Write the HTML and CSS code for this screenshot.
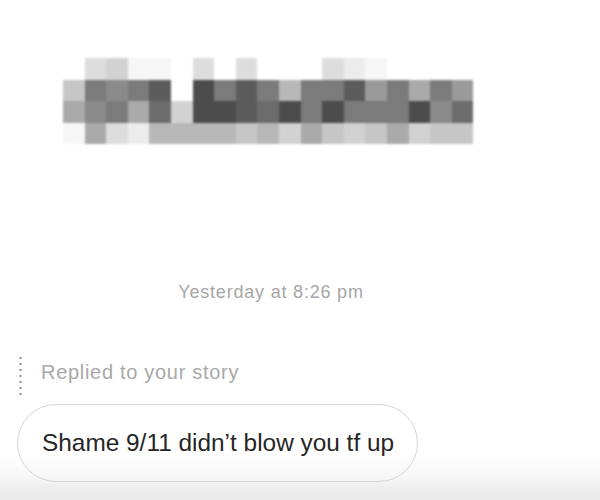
FILE: index.html
```html
<!DOCTYPE html>
<html lang="en">
<head>
<meta charset="utf-8">
<title>Story reply</title>
<link rel="stylesheet" href="styles.css">
</head>
<body>
<div class="page">
  <div class="mosaic">
    <i class="x"></i><i class="l2"></i><i class="l3"></i><i class="l0"></i><i class="l0"></i><i class="x"></i><i class="l2"></i><i class="x"></i><i class="l2"></i><i class="x"></i><i class="x"></i><i class="x"></i><i class="l2"></i><i class="l1"></i><i class="l0"></i><i class="x"></i><i class="x"></i><i class="x"></i><i class="x"></i>
    <i class="l4"></i><i class="l9"></i><i class="l8"></i><i class="l9"></i><i class="l11"></i><i class="x"></i><i class="l12"></i><i class="l9"></i><i class="l11"></i><i class="l9"></i><i class="l5"></i><i class="l9"></i><i class="l9"></i><i class="l11"></i><i class="l7"></i><i class="l9"></i><i class="l6"></i><i class="l9"></i><i class="l7"></i>
    <i class="l6"></i><i class="l8"></i><i class="l9"></i><i class="l6"></i><i class="l10"></i><i class="l3"></i><i class="l12"></i><i class="l12"></i><i class="l11"></i><i class="l10"></i><i class="l12"></i><i class="l9"></i><i class="l12"></i><i class="l9"></i><i class="l9"></i><i class="l9"></i><i class="l12"></i><i class="l8"></i><i class="l10"></i>
    <i class="l0"></i><i class="l6"></i><i class="l2"></i><i class="l1"></i><i class="l5"></i><i class="l5"></i><i class="l5"></i><i class="l5"></i><i class="l4"></i><i class="l5"></i><i class="l3"></i><i class="l6"></i><i class="l4"></i><i class="l3"></i><i class="l4"></i><i class="l6"></i><i class="l3"></i><i class="l4"></i><i class="l4"></i>
  </div>

  <div class="timestamp">Yesterday at 8:26 pm</div>

  <div class="reply">
    <span class="dots"></span>
    <span class="reply-label">Replied to your story</span>
  </div>

  <div class="bubble">Shame 9/11 didn’t blow you tf up</div>
</div>
</body>
</html>
```

FILE: styles.css
```css
html {
  height: 100%;
  background: linear-gradient(to bottom, #ffffff 0, #ffffff 455px, #f6f6f6 478px, #eeeeee 488px, #e9e9e9 500px);
  background-repeat: no-repeat;
}

body {
  margin: 0;
  font-family: "Liberation Sans", Arial, Helvetica, sans-serif;
  color: #222;
}

.page {
  width: 600px;
  height: 500px;
  overflow: hidden;
}

.mosaic {
  display: grid;
  grid-template-columns: repeat(19, 21.6px);
  grid-auto-rows: 21.5px;
  margin: 58px 0 0 63px;
  width: max-content;
  filter: blur(1px);
}

.mosaic i { display: block; }
.mosaic .x { background: transparent; }
.mosaic .l0 { background: #f6f6f6; }
.mosaic .l1 { background: #ececec; }
.mosaic .l2 { background: #dddddd; }
.mosaic .l3 { background: #d2d2d2; }
.mosaic .l4 { background: #c6c6c6; }
.mosaic .l5 { background: #b8b8b8; }
.mosaic .l6 { background: #aaaaaa; }
.mosaic .l7 { background: #9a9a9a; }
.mosaic .l8 { background: #8a8a8a; }
.mosaic .l9 { background: #7b7b7b; }
.mosaic .l10 { background: #6c6c6c; }
.mosaic .l11 { background: #5c5c5c; }
.mosaic .l12 { background: #4c4c4c; }

.timestamp {
  margin-top: 137px;
  padding-right: 58px;
  text-align: center;
  font-size: 18px;
  line-height: 22px;
  letter-spacing: 0.8px;
  color: #a6a6a6;
}

.reply {
  display: flex;
  align-items: flex-start;
  gap: 19px;
  margin-top: 52px;
  padding-left: 19px;
}

.dots {
  width: 3px;
  height: 42px;
  background-image: radial-gradient(circle, #a0a0a0 1px, transparent 1.4px);
  background-size: 3px 6px;
}

.reply-label {
  margin-top: 5px;
  font-size: 20px;
  line-height: 24px;
  letter-spacing: 0.7px;
  color: #a8a8a8;
}

.bubble {
  display: inline-block;
  margin: 7px 0 0 17px;
  padding: 0 23px 0 24px;
  border: 1px solid #d6d6d6;
  border-radius: 39px;
  font-size: 24.4px;
  line-height: 76px;
  color: #262626;
  white-space: nowrap;
}
```
